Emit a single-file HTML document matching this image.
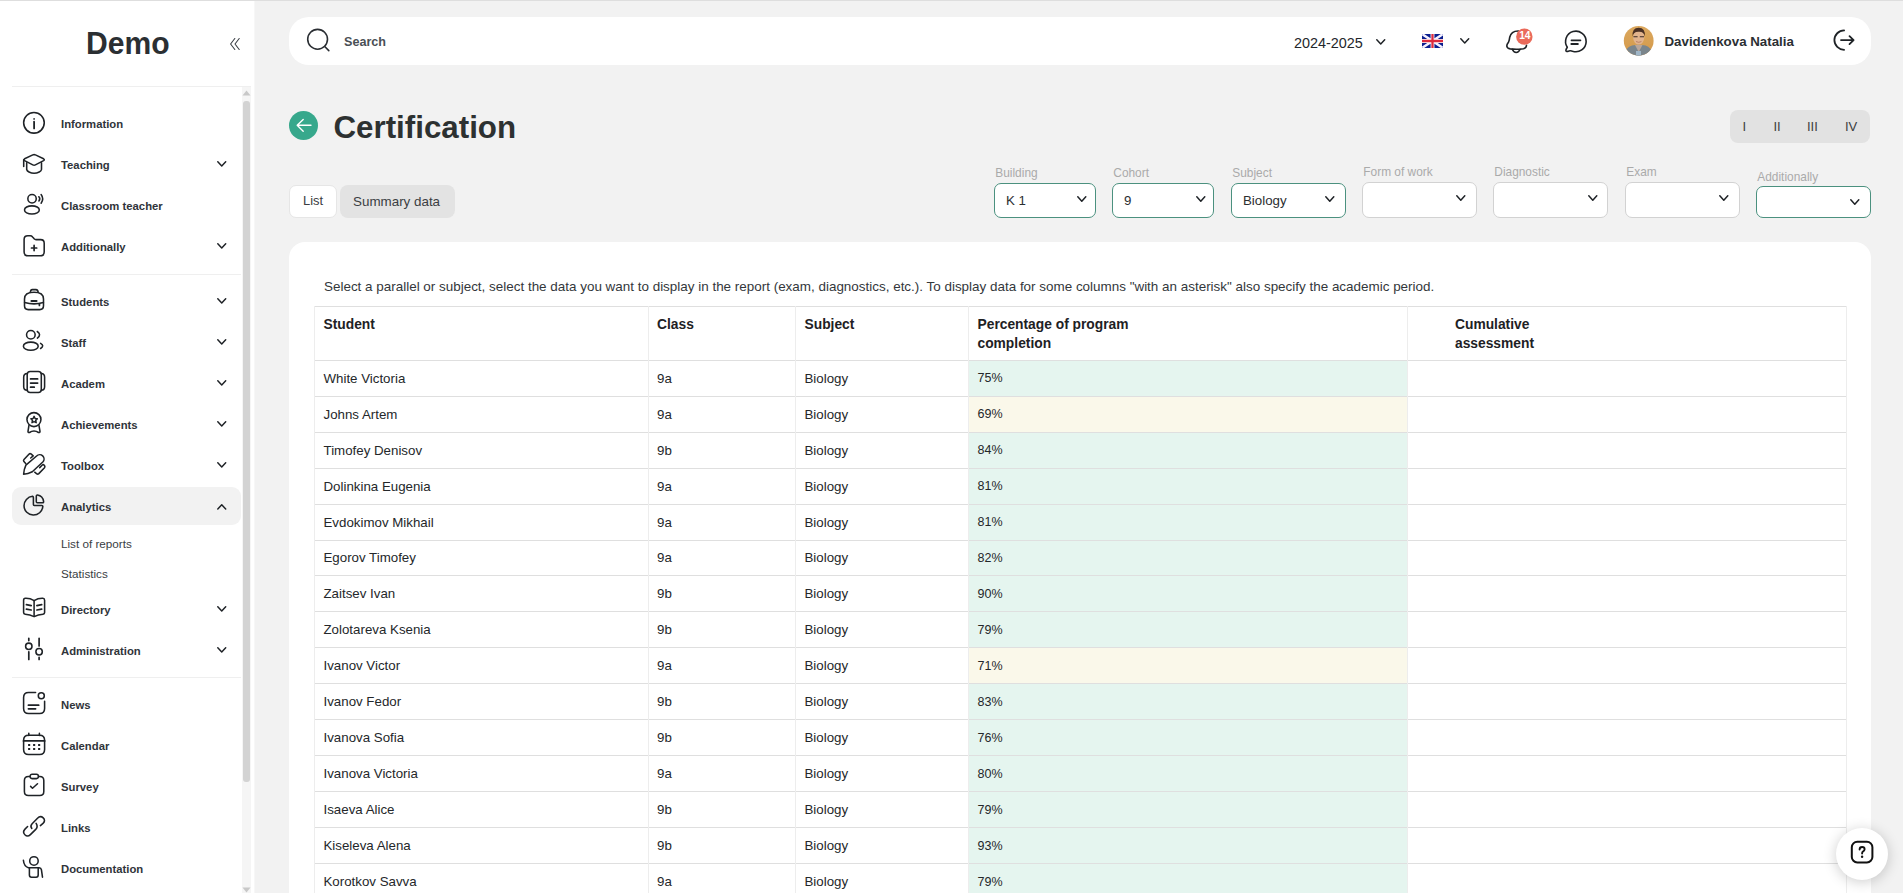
<!DOCTYPE html>
<html><head><meta charset="utf-8"><title>Certification</title>
<style>
html,body{margin:0;padding:0;}
body{width:1903px;height:893px;overflow:hidden;background:#f2f2f2;font-family:"Liberation Sans", sans-serif;position:relative;}
div,span{box-sizing:border-box;}
</style></head><body>

<div style="position:absolute;left:0;top:0;width:1903px;height:1px;background:#dedede"></div>
<div style="position:absolute;left:0;top:1px;width:254px;height:892px;background:#fff"></div>
<div style="position:absolute;left:254px;top:1px;width:1px;height:892px;background:#f7f7f7"></div>
<div style="position:absolute;left:85.8px;top:27.41px;font-size:32px;line-height:32px;font-weight:700;color:#2b2f33;white-space:nowrap;transform:scaleX(0.94);transform-origin:0 0">Demo</div>
<svg style="position:absolute;left:229px;top:37px" width="12" height="14" viewBox="0 0 12 14"><path d="M5.8 1.5 L1.6 7 L5.8 12.5 M10.2 1.5 L6 7 L10.2 12.5" fill="none" stroke="#3a3f45" stroke-width="1.1" stroke-linecap="round" stroke-linejoin="round"/></svg>
<div style="position:absolute;left:12px;top:86px;width:239px;height:1px;background:#efefef"></div>
<div style="position:absolute;left:12px;top:274px;width:229px;height:1px;background:#efefef"></div>
<div style="position:absolute;left:12px;top:677px;width:229px;height:1px;background:#efefef"></div>
<div style="position:absolute;left:242px;top:87px;width:9px;height:806px;background:#f5f5f5"></div>
<div style="position:absolute;left:243px;top:101px;width:7px;height:681px;background:#d3d3d3;border-radius:3px"></div>
<svg style="position:absolute;left:242px;top:90px" width="9" height="6" viewBox="0 0 9 6"><path d="M4.5 0.5 L8.5 5.5 L0.5 5.5Z" fill="#c8c8c8"/></svg>
<svg style="position:absolute;left:242px;top:887px" width="9" height="6" viewBox="0 0 9 6"><path d="M0.5 0.5 L8.5 0.5 L4.5 5.5Z" fill="#c8c8c8"/></svg>
<div style="position:absolute;left:12px;top:487px;width:229px;height:38px;background:#f2f2f2;border-radius:9px"></div>
<svg style="position:absolute;left:20px;top:109px" width="28" height="28" viewBox="0 0 28 28" stroke="#1f2327" stroke-width="1.55" fill="none" stroke-linecap="round" stroke-linejoin="round"><circle cx="13.95" cy="13.8" r="10.3"/><path d="M14.1 12.6 V19.4" stroke-width="1.8"/><circle cx="14.1" cy="9.9" r="0.9" fill="#2a2e33" stroke="none"/></svg>
<div style="position:absolute;left:61px;top:118.73px;font-size:11.3px;line-height:11.3px;font-weight:700;color:#30343a;white-space:nowrap;">Information</div>
<svg style="position:absolute;left:20px;top:150px" width="28" height="28" viewBox="0 0 28 28" stroke="#1f2327" stroke-width="1.55" fill="none" stroke-linecap="round" stroke-linejoin="round"><path d="M12.8 4.9 Q14.1 4.3 15.4 4.9 L23.6 8.8 Q25 9.7 23.6 10.6 L15.4 14.9 Q14.1 15.6 12.8 14.9 L4.6 10.6 Q3.2 9.7 4.6 8.8 Z"/><path d="M3.7 9.8 V16.5"/><path d="M6.7 12.8 V19.5 Q7 21 9 22 Q11.5 23.3 14.1 23.3 Q16.7 23.3 19.2 22 Q21.3 21 21.5 19.5 V12.8"/></svg>
<div style="position:absolute;left:61px;top:159.73px;font-size:11.3px;line-height:11.3px;font-weight:700;color:#30343a;white-space:nowrap;">Teaching</div>
<svg style="position:absolute;left:216px;top:160.1px" width="11.5" height="7.5" viewBox="-1 -1 11.5 7.5"><path d="M0.8 0.8 L4.75 4.9 L8.7 0.8" fill="none" stroke="#1e2226" stroke-width="1.5" stroke-linecap="round" stroke-linejoin="round"/></svg>
<svg style="position:absolute;left:20px;top:191px" width="28" height="28" viewBox="0 0 28 28" stroke="#1f2327" stroke-width="1.55" fill="none" stroke-linecap="round" stroke-linejoin="round"><circle cx="12.05" cy="7.75" r="4.2"/><ellipse cx="11.9" cy="18.95" rx="7.4" ry="4.1"/><path d="M18.9 5.7 Q20.7 7.8 18.9 9.9"/><path d="M21.1 3.5 Q24.3 7.8 21.1 12.2"/></svg>
<div style="position:absolute;left:61px;top:200.73px;font-size:11.3px;line-height:11.3px;font-weight:700;color:#30343a;white-space:nowrap;">Classroom teacher</div>
<svg style="position:absolute;left:20px;top:232px" width="28" height="28" viewBox="0 0 28 28" stroke="#1f2327" stroke-width="1.55" fill="none" stroke-linecap="round" stroke-linejoin="round"><path d="M4.1 7.5 Q4.1 3.8 7.8 3.8 H10.2 Q11.6 3.8 12.6 5 L14.4 7 Q15 7.6 16 7.6 H20.6 Q24.2 7.6 24.2 11.2 V20 Q24.2 23.8 20.4 23.8 H7.9 Q4.1 23.8 4.1 20 Z"/><path d="M14.1 13.4 V18.6 M11.5 16 H16.7" stroke-width="1.7"/></svg>
<div style="position:absolute;left:61px;top:241.73px;font-size:11.3px;line-height:11.3px;font-weight:700;color:#30343a;white-space:nowrap;">Additionally</div>
<svg style="position:absolute;left:216px;top:242.1px" width="11.5" height="7.5" viewBox="-1 -1 11.5 7.5"><path d="M0.8 0.8 L4.75 4.9 L8.7 0.8" fill="none" stroke="#1e2226" stroke-width="1.5" stroke-linecap="round" stroke-linejoin="round"/></svg>
<svg style="position:absolute;left:20px;top:287px" width="28" height="28" viewBox="0 0 28 28" stroke="#1f2327" stroke-width="1.55" fill="none" stroke-linecap="round" stroke-linejoin="round"><path d="M10.3 5.4 Q10.6 2.6 12.3 2.6 H16 Q17.7 2.6 18.2 5.2"/><path d="M4.5 12 Q4.5 5.3 14 5.3 Q23.5 5.3 23.5 12 V18.8 Q23.5 22.6 19.7 22.6 H8.3 Q4.5 22.6 4.5 18.8 Z"/><path d="M4.6 15.5 Q14 18.3 23.4 15.5"/><path d="M11.4 14 H16.6" stroke-width="1.9"/><path d="M19.4 17.2 V18.4" stroke-width="1.7"/></svg>
<div style="position:absolute;left:61px;top:296.73px;font-size:11.3px;line-height:11.3px;font-weight:700;color:#30343a;white-space:nowrap;">Students</div>
<svg style="position:absolute;left:216px;top:297.1px" width="11.5" height="7.5" viewBox="-1 -1 11.5 7.5"><path d="M0.8 0.8 L4.75 4.9 L8.7 0.8" fill="none" stroke="#1e2226" stroke-width="1.5" stroke-linecap="round" stroke-linejoin="round"/></svg>
<svg style="position:absolute;left:20px;top:328px" width="28" height="28" viewBox="0 0 28 28" stroke="#1f2327" stroke-width="1.55" fill="none" stroke-linecap="round" stroke-linejoin="round"><circle cx="10.85" cy="6.75" r="4.3"/><ellipse cx="10.8" cy="18.2" rx="7.4" ry="4.1"/><path d="M17.3 3.5 Q21.8 6.7 17.4 10.1"/><path d="M20.6 15.3 Q24.8 17.8 20.6 20.5"/></svg>
<div style="position:absolute;left:61px;top:337.73px;font-size:11.3px;line-height:11.3px;font-weight:700;color:#30343a;white-space:nowrap;">Staff</div>
<svg style="position:absolute;left:216px;top:338.1px" width="11.5" height="7.5" viewBox="-1 -1 11.5 7.5"><path d="M0.8 0.8 L4.75 4.9 L8.7 0.8" fill="none" stroke="#1e2226" stroke-width="1.5" stroke-linecap="round" stroke-linejoin="round"/></svg>
<svg style="position:absolute;left:20px;top:369px" width="28" height="28" viewBox="0 0 28 28" stroke="#1f2327" stroke-width="1.55" fill="none" stroke-linecap="round" stroke-linejoin="round"><path d="M10.2 2.5 H18.3 Q21.3 2.5 21.3 5.5 V20.5 Q21.3 23.5 18.3 23.5 H10.2 Q7.2 23.5 7.2 20.5 V5.5 Q7.2 2.5 10.2 2.5 Z"/><path d="M7.2 4.6 Q3.7 4.8 3.7 8.2 V17.8 Q3.7 21.2 7.2 21.3"/><path d="M21.3 4.6 Q24.6 4.8 24.6 8.2 V17.8 Q24.6 21.2 21.3 21.3"/><path d="M10.6 9.9 H17.6 M10.6 14.1 H17.6 M10.6 18.2 H14.2" stroke-width="1.8"/></svg>
<div style="position:absolute;left:61px;top:378.73px;font-size:11.3px;line-height:11.3px;font-weight:700;color:#30343a;white-space:nowrap;">Academ</div>
<svg style="position:absolute;left:216px;top:379.1px" width="11.5" height="7.5" viewBox="-1 -1 11.5 7.5"><path d="M0.8 0.8 L4.75 4.9 L8.7 0.8" fill="none" stroke="#1e2226" stroke-width="1.5" stroke-linecap="round" stroke-linejoin="round"/></svg>
<svg style="position:absolute;left:20px;top:410px" width="28" height="28" viewBox="0 0 28 28" stroke="#1f2327" stroke-width="1.55" fill="none" stroke-linecap="round" stroke-linejoin="round"><circle cx="13.95" cy="9.6" r="7"/><path d="M14.1 6.4 L15.1 8.5 L17.3 8.8 L15.7 10.4 L16.2 12.7 L14.1 11.6 L12 12.7 L12.5 10.4 L10.9 8.8 L13.1 8.5 Z" stroke-width="1.5"/><path d="M8.9 15.6 L8 21.3 Q7.9 22.9 9.5 22.5 Q11.6 21 14 21 Q16.4 21 18.5 22.5 Q20.1 22.9 20 21.3 L19 15.6"/></svg>
<div style="position:absolute;left:61px;top:419.73px;font-size:11.3px;line-height:11.3px;font-weight:700;color:#30343a;white-space:nowrap;">Achievements</div>
<svg style="position:absolute;left:216px;top:420.1px" width="11.5" height="7.5" viewBox="-1 -1 11.5 7.5"><path d="M0.8 0.8 L4.75 4.9 L8.7 0.8" fill="none" stroke="#1e2226" stroke-width="1.5" stroke-linecap="round" stroke-linejoin="round"/></svg>
<svg style="position:absolute;left:20px;top:451px" width="28" height="28" viewBox="0 0 28 28" stroke="#1f2327" stroke-width="1.55" fill="none" stroke-linecap="round" stroke-linejoin="round"><path d="M5.9 14.2 L16.6 5 A4.2 4.2 0 0 1 22.8 11 L12.3 20.8 Q8 23 3.6 23.2 Q3.9 18.5 5.9 14.2 Z"/><path d="M5.7 12.6 L3.9 10.6 Q3.1 9.5 4 8.5 L8.9 3.2 Q9.9 2.2 11 2.9 L13.2 4.8 L10.7 7"/><path d="M19.7 16.6 L22.3 14 Q23.3 13.2 24.2 14.2 L24.6 14.7 Q25.3 15.7 24.5 16.7 L18.8 22.6 Q17.8 23.5 16.8 22.8 L14.7 21.2"/></svg>
<div style="position:absolute;left:61px;top:460.73px;font-size:11.3px;line-height:11.3px;font-weight:700;color:#30343a;white-space:nowrap;">Toolbox</div>
<svg style="position:absolute;left:216px;top:461.1px" width="11.5" height="7.5" viewBox="-1 -1 11.5 7.5"><path d="M0.8 0.8 L4.75 4.9 L8.7 0.8" fill="none" stroke="#1e2226" stroke-width="1.5" stroke-linecap="round" stroke-linejoin="round"/></svg>
<svg style="position:absolute;left:20px;top:492px" width="28" height="28" viewBox="0 0 28 28" stroke="#1f2327" stroke-width="1.55" fill="none" stroke-linecap="round" stroke-linejoin="round"><path d="M12.6 4.3 Q13.3 4.6 13.4 5.5 V12.5 Q13.4 13.4 14.3 13.4 H21.8 Q22.9 13.5 22.8 14.6 A9.4 9.4 0 1 1 12.6 4.3 Z"/><path d="M16.3 4.3 Q16.3 3 17.5 3.1 A7.6 7.6 0 0 1 23.6 9.4 Q23.8 10.7 22.5 10.7 H17.3 Q16.3 10.7 16.3 9.7 Z"/></svg>
<div style="position:absolute;left:61px;top:501.73px;font-size:11.3px;line-height:11.3px;font-weight:700;color:#30343a;white-space:nowrap;">Analytics</div>
<svg style="position:absolute;left:216px;top:502.6px" width="11.5" height="7.5" viewBox="-1 -1 11.5 7.5"><path d="M0.8 4.9 L4.75 0.8 L8.7 4.9" fill="none" stroke="#1e2226" stroke-width="1.5" stroke-linecap="round" stroke-linejoin="round"/></svg>
<svg style="position:absolute;left:20px;top:595px" width="28" height="28" viewBox="0 0 28 28" stroke="#1f2327" stroke-width="1.55" fill="none" stroke-linecap="round" stroke-linejoin="round"><path d="M14.1 5.6 Q10 3.1 5.4 3.3 Q3.6 3.4 3.6 5.2 V17.6 Q3.6 19.1 5.2 19.2 Q10 19.5 14.1 21.6 Q18.2 19.5 23 19.2 Q24.6 19.1 24.6 17.6 V5.2 Q24.6 3.4 22.8 3.3 Q18.2 3.1 14.1 5.6 Z"/><path d="M14.1 5.8 V21"/><path d="M6.4 9.7 L11.2 10.7 M6.4 14.1 L11.2 15 M21.7 9.7 L16.9 10.7 M21.7 14.1 L16.9 15" stroke-width="1.7"/></svg>
<div style="position:absolute;left:61px;top:604.73px;font-size:11.3px;line-height:11.3px;font-weight:700;color:#30343a;white-space:nowrap;">Directory</div>
<svg style="position:absolute;left:216px;top:605.1px" width="11.5" height="7.5" viewBox="-1 -1 11.5 7.5"><path d="M0.8 0.8 L4.75 4.9 L8.7 0.8" fill="none" stroke="#1e2226" stroke-width="1.5" stroke-linecap="round" stroke-linejoin="round"/></svg>
<svg style="position:absolute;left:20px;top:636px" width="28" height="28" viewBox="0 0 28 28" stroke="#1f2327" stroke-width="1.55" fill="none" stroke-linecap="round" stroke-linejoin="round"><path d="M8.8 2.3 V4.6 M8.8 15.8 V23.4 M19.1 2.3 V10 M19.1 21.4 V23.4" stroke-width="1.7"/><circle cx="8.8" cy="10.3" r="3.2"/><circle cx="19.1" cy="15.7" r="3.2"/></svg>
<div style="position:absolute;left:61px;top:645.73px;font-size:11.3px;line-height:11.3px;font-weight:700;color:#30343a;white-space:nowrap;">Administration</div>
<svg style="position:absolute;left:216px;top:646.1px" width="11.5" height="7.5" viewBox="-1 -1 11.5 7.5"><path d="M0.8 0.8 L4.75 4.9 L8.7 0.8" fill="none" stroke="#1e2226" stroke-width="1.5" stroke-linecap="round" stroke-linejoin="round"/></svg>
<svg style="position:absolute;left:20px;top:690px" width="28" height="28" viewBox="0 0 28 28" stroke="#1f2327" stroke-width="1.55" fill="none" stroke-linecap="round" stroke-linejoin="round"><path d="M15.6 2.5 H8.6 Q3.6 2.5 3.6 7.5 V18.4 Q3.6 23.4 8.6 23.4 H19.6 Q24.6 23.4 24.6 18.4 V11.2"/><circle cx="21.3" cy="5.8" r="3"/><path d="M8.4 15.2 H18.7 M8.4 18.8 H15.6" stroke-width="1.7"/></svg>
<div style="position:absolute;left:61px;top:699.73px;font-size:11.3px;line-height:11.3px;font-weight:700;color:#30343a;white-space:nowrap;">News</div>
<svg style="position:absolute;left:20px;top:731px" width="28" height="28" viewBox="0 0 28 28" stroke="#1f2327" stroke-width="1.55" fill="none" stroke-linecap="round" stroke-linejoin="round"><path d="M8.6 4.2 H19.6 Q24.6 4.2 24.6 9.2 V18.4 Q24.6 23.4 19.6 23.4 H8.6 Q3.6 23.4 3.6 18.4 V9.2 Q3.6 4.2 8.6 4.2 Z"/><path d="M8.8 2.2 V4.4 M19.4 2.2 V4.4"/><path d="M3.6 9.9 H24.6" stroke-width="1.9"/><path d="M9.1 13.9 h0.1 M14.1 13.9 h0.1 M19.1 13.9 h0.1 M9.1 18 h0.1 M14.1 18 h0.1 M19.1 18 h0.1" stroke-width="2" stroke-linecap="square"/></svg>
<div style="position:absolute;left:61px;top:740.73px;font-size:11.3px;line-height:11.3px;font-weight:700;color:#30343a;white-space:nowrap;">Calendar</div>
<svg style="position:absolute;left:20px;top:772px" width="28" height="28" viewBox="0 0 28 28" stroke="#1f2327" stroke-width="1.55" fill="none" stroke-linecap="round" stroke-linejoin="round"><path d="M9.6 4.4 H8.4 Q4.4 4.4 4.4 8.4 V19.4 Q4.4 23.4 8.4 23.4 H19.8 Q23.8 23.4 23.8 19.4 V8.4 Q23.8 4.4 19.8 4.4 H18.6"/><rect x="10.1" y="2.3" width="8.3" height="4.3" rx="2"/><path d="M10.6 14.4 L12.5 16.3 L17.5 11.7"/></svg>
<div style="position:absolute;left:61px;top:781.73px;font-size:11.3px;line-height:11.3px;font-weight:700;color:#30343a;white-space:nowrap;">Survey</div>
<svg style="position:absolute;left:20px;top:813px" width="28" height="28" viewBox="0 0 28 28" stroke="#1f2327" stroke-width="1.55" fill="none" stroke-linecap="round" stroke-linejoin="round"><path d="M11.8 15.4 Q9.9 13.1 12.1 10.8 L17.5 5.2 Q20.4 2.3 23.2 4.9 Q25.9 7.6 23 10.4 L20.4 12.6"/><path d="M7.6 13.5 L5 16.1 Q2.2 19 4.9 21.8 Q7.6 24.4 10.4 21.6 L16 16.1 Q18.2 13.7 16.1 10.4"/></svg>
<div style="position:absolute;left:61px;top:822.73px;font-size:11.3px;line-height:11.3px;font-weight:700;color:#30343a;white-space:nowrap;">Links</div>
<svg style="position:absolute;left:20px;top:854px" width="28" height="28" viewBox="0 0 28 28" stroke="#1f2327" stroke-width="1.55" fill="none" stroke-linecap="round" stroke-linejoin="round"><circle cx="13.95" cy="6.9" r="4.25"/><path d="M3.4 6.3 Q4 12.5 8.4 13.7 H19.2 Q21 13.9 21.4 15.6 L22.5 23.2"/><path d="M9.4 13.8 V21.1 Q9.4 23.2 11.5 23.2 H16.1 Q18.2 23.2 18.2 21.1 V13.8"/></svg>
<div style="position:absolute;left:61px;top:863.73px;font-size:11.3px;line-height:11.3px;font-weight:700;color:#30343a;white-space:nowrap;">Documentation</div>
<div style="position:absolute;left:61px;top:537.70px;font-size:11.7px;line-height:11.7px;font-weight:400;color:#3a3e44;white-space:nowrap;">List of reports</div>
<div style="position:absolute;left:61px;top:567.70px;font-size:11.7px;line-height:11.7px;font-weight:400;color:#3a3e44;white-space:nowrap;">Statistics</div>
<div style="position:absolute;left:289px;top:17px;width:1582px;height:48px;background:#fff;border-radius:20px"></div>
<svg style="position:absolute;left:305px;top:27px" width="26" height="26" viewBox="0 0 26 26"><circle cx="12.6" cy="12.3" r="9.9" fill="none" stroke="#2a2e33" stroke-width="1.6"/><path d="M19.7 19.5 L23.8 23.6" stroke="#2a2e33" stroke-width="1.6" stroke-linecap="round"/></svg>
<div style="position:absolute;left:344px;top:36.13px;font-size:12.6px;line-height:12.6px;font-weight:700;color:#4a4f55;white-space:nowrap;">Search</div>
<div style="position:absolute;left:1294px;top:35.61px;font-size:14.4px;line-height:14.4px;font-weight:400;color:#24272b;white-space:nowrap;">2024-2025</div>
<svg style="position:absolute;left:1375px;top:38px" width="11.5" height="7.5" viewBox="-1 -1 11.5 7.5"><path d="M0.8 0.8 L4.75 4.9 L8.7 0.8" fill="none" stroke="#1e2226" stroke-width="1.5" stroke-linecap="round" stroke-linejoin="round"/></svg>
<svg style="position:absolute;left:1422px;top:34px" width="21" height="14" viewBox="0 0 60 40"><defs><clipPath id="fl"><rect width="60" height="40" rx="4"/></clipPath></defs><g clip-path="url(#fl)"><rect width="60" height="40" fill="#0b1f8f"/><path d="M0 0 L60 40 M60 0 L0 40" stroke="#f4f0ff" stroke-width="7"/><path d="M30 0 V40 M0 20 H60" stroke="#fff" stroke-width="11"/><path d="M30 0 V40 M0 20 H60" stroke="#dd2a3e" stroke-width="6.5"/></g></svg>
<svg style="position:absolute;left:1459px;top:37px" width="11.5" height="7.5" viewBox="-1 -1 11.5 7.5"><path d="M0.8 0.8 L4.75 4.9 L8.7 0.8" fill="none" stroke="#1e2226" stroke-width="1.5" stroke-linecap="round" stroke-linejoin="round"/></svg>
<svg style="position:absolute;left:1502px;top:26px" width="34" height="30" viewBox="0 0 34 30"><path d="M16.5 5 Q9.2 4.8 7.7 11.3 Q7.3 14.4 6.6 16 Q4.7 18.4 4.8 20.1 Q5.2 22.4 8.2 22.9 Q15 23.8 21.5 22.7 Q24.3 22.1 24.5 19.2" fill="none" stroke="#1e2226" stroke-width="1.6" stroke-linecap="round" stroke-linejoin="round"/><path d="M10.3 23.3 Q11.6 26.5 14.2 26.5 Q16.8 26.5 18.1 23.3" fill="none" stroke="#1e2226" stroke-width="1.6" stroke-linecap="round"/><circle cx="22.35" cy="10.65" r="8.2" fill="#ea6a5a"/></svg>
<div style="position:absolute;left:1519.3px;top:31.27px;font-size:10.2px;line-height:10.2px;font-weight:700;color:#fff;white-space:nowrap;letter-spacing:-0.3px">14</div>
<svg style="position:absolute;left:1560px;top:26px" width="34" height="30" viewBox="0 0 34 30"><path d="M7.3 21.2 A10.3 10.3 0 1 1 12.5 25.2 Q10.6 24.3 8.8 25.1 Q6.1 26.2 5.9 24.6 Q5.8 23.3 7.3 21.2 Z" fill="none" stroke="#1e2226" stroke-width="1.6" stroke-linejoin="round"/><path d="M11.4 14.4 H20.5" stroke="#1e2226" stroke-width="1.6" stroke-linecap="round"/><path d="M11.4 18.1 H17.8" stroke="#1e2226" stroke-width="2" stroke-linecap="round"/></svg>
<svg style="position:absolute;left:1620px;top:22px" width="38" height="38" viewBox="0 0 38 38"><defs><clipPath id="av"><circle cx="18.7" cy="18.8" r="14.9"/></clipPath><linearGradient id="avg" x1="0" y1="0" x2="0" y2="1"><stop offset="0" stop-color="#dcaa62"/><stop offset="1" stop-color="#d39645"/></linearGradient></defs><g clip-path="url(#av)"><rect width="38" height="38" fill="url(#avg)"/><path d="M4 36 Q5 25 12 23.5 Q18.7 22 25.5 23.5 Q32 25 33.5 36 Z" fill="#7a858c"/><path d="M15 23 L18.7 30 L22.5 23 Z" fill="#b9a69a"/><rect x="16" y="29" width="5" height="6" fill="#9fb6c8"/><ellipse cx="18.7" cy="15.2" rx="5.6" ry="7.4" fill="#e2b48e"/><path d="M12.6 14.5 Q11.8 6 18.7 5.8 Q25.6 6 24.8 14.5 Q24 9.5 18.7 9.8 Q13.4 9.5 12.6 14.5 Z" fill="#4a3024"/><path d="M13.4 14.8 h4.2 M19.8 14.8 h4.2" stroke="#3a2a24" stroke-width="1.1"/><path d="M16 19.5 Q18.7 21.2 21.4 19.5" stroke="#b07560" stroke-width="0.8" fill="none"/></g></svg>
<div style="position:absolute;left:1664.5px;top:34.74px;font-size:13.3px;line-height:13.3px;font-weight:700;color:#2b2f33;white-space:nowrap;">Davidenkova Natalia</div>
<svg style="position:absolute;left:1828px;top:24px" width="34" height="32" viewBox="0 0 34 32"><path d="M16.1 6.4 A9.7 9.7 0 1 0 16.1 25.8" fill="none" stroke="#1e2226" stroke-width="1.8" stroke-linecap="round"/><path d="M13 16.1 H25.6 M21.5 12.1 L25.6 16.1 L21.5 20.1" fill="none" stroke="#1e2226" stroke-width="1.8" stroke-linecap="round" stroke-linejoin="round"/></svg>
<div style="position:absolute;left:289.2px;top:110.7px;width:29px;height:29px;border-radius:50%;background:#37a88c"></div>
<svg style="position:absolute;left:294px;top:115px" width="20" height="20" viewBox="294 115 20 20"><path d="M311 125.3 H297.3 M303.2 119.6 L297.2 125.3 L303.2 131.2" fill="none" stroke="#fff" stroke-width="1.4" stroke-linecap="round" stroke-linejoin="round"/></svg>
<div style="position:absolute;left:333.5px;top:112.10px;font-size:31.3px;line-height:31.3px;font-weight:700;color:#2d3131;white-space:nowrap;">Certification</div>
<div style="position:absolute;left:1730px;top:110px;width:140px;height:33px;background:#e2e2e2;border-radius:8px"></div>
<div style="position:absolute;left:1742.5px;top:120.00px;font-size:13px;line-height:13px;font-weight:400;color:#3a3d40;white-space:nowrap;">I</div>
<div style="position:absolute;left:1773.5px;top:120.00px;font-size:13px;line-height:13px;font-weight:400;color:#3a3d40;white-space:nowrap;">II</div>
<div style="position:absolute;left:1807px;top:120.00px;font-size:13px;line-height:13px;font-weight:400;color:#3a3d40;white-space:nowrap;">III</div>
<div style="position:absolute;left:1845px;top:120.00px;font-size:13px;line-height:13px;font-weight:400;color:#3a3d40;white-space:nowrap;">IV</div>
<div style="position:absolute;left:289px;top:185px;width:48px;height:33px;background:#fff;border:1px solid #e6e6e6;border-radius:7px"></div>
<div style="position:absolute;left:303px;top:195.08px;font-size:12.9px;line-height:12.9px;font-weight:400;color:#3b3e42;white-space:nowrap;">List</div>
<div style="position:absolute;left:340px;top:185px;width:115px;height:33px;background:#e3e3e3;border-radius:8px"></div>
<div style="position:absolute;left:353px;top:194.66px;font-size:13.4px;line-height:13.4px;font-weight:400;color:#3b3e42;white-space:nowrap;">Summary data</div>
<div style="position:absolute;left:995.3px;top:167.83px;font-size:11.9px;line-height:11.9px;font-weight:400;color:#aaaaaa;white-space:nowrap;">Building</div>
<div style="position:absolute;left:994px;top:183px;width:102px;height:35px;background:#fff;border:1px solid #4b917f;border-radius:7px"></div>
<div style="position:absolute;left:1006px;top:193.54px;font-size:13.3px;line-height:13.3px;font-weight:400;color:#2b2e31;white-space:nowrap;">K 1</div>
<svg style="position:absolute;left:1076px;top:195px" width="11.6" height="7.8" viewBox="-1 -1 11.6 7.8"><path d="M0.8 0.8 L4.8 5.2 L8.799999999999999 0.8" fill="none" stroke="#1e2226" stroke-width="1.5" stroke-linecap="round" stroke-linejoin="round"/></svg>
<div style="position:absolute;left:1113.3px;top:167.83px;font-size:11.9px;line-height:11.9px;font-weight:400;color:#aaaaaa;white-space:nowrap;">Cohort</div>
<div style="position:absolute;left:1112px;top:183px;width:102px;height:35px;background:#fff;border:1px solid #4b917f;border-radius:7px"></div>
<div style="position:absolute;left:1124px;top:193.54px;font-size:13.3px;line-height:13.3px;font-weight:400;color:#2b2e31;white-space:nowrap;">9</div>
<svg style="position:absolute;left:1194.5px;top:195px" width="11.6" height="7.8" viewBox="-1 -1 11.6 7.8"><path d="M0.8 0.8 L4.8 5.2 L8.799999999999999 0.8" fill="none" stroke="#1e2226" stroke-width="1.5" stroke-linecap="round" stroke-linejoin="round"/></svg>
<div style="position:absolute;left:1232.3px;top:167.83px;font-size:11.9px;line-height:11.9px;font-weight:400;color:#aaaaaa;white-space:nowrap;">Subject</div>
<div style="position:absolute;left:1231px;top:183px;width:115px;height:35px;background:#fff;border:1px solid #4b917f;border-radius:7px"></div>
<div style="position:absolute;left:1243px;top:193.54px;font-size:13.3px;line-height:13.3px;font-weight:400;color:#2b2e31;white-space:nowrap;">Biology</div>
<svg style="position:absolute;left:1324px;top:195px" width="11.6" height="7.8" viewBox="-1 -1 11.6 7.8"><path d="M0.8 0.8 L4.8 5.2 L8.799999999999999 0.8" fill="none" stroke="#1e2226" stroke-width="1.5" stroke-linecap="round" stroke-linejoin="round"/></svg>
<div style="position:absolute;left:1363.3px;top:166.83px;font-size:11.9px;line-height:11.9px;font-weight:400;color:#aaaaaa;white-space:nowrap;">Form of work</div>
<div style="position:absolute;left:1362px;top:182px;width:115px;height:36px;background:#fff;border:1px solid #d2d2d2;border-radius:7px"></div>
<svg style="position:absolute;left:1455px;top:194.3px" width="11.6" height="7.8" viewBox="-1 -1 11.6 7.8"><path d="M0.8 0.8 L4.8 5.2 L8.799999999999999 0.8" fill="none" stroke="#1e2226" stroke-width="1.5" stroke-linecap="round" stroke-linejoin="round"/></svg>
<div style="position:absolute;left:1494.3px;top:166.83px;font-size:11.9px;line-height:11.9px;font-weight:400;color:#aaaaaa;white-space:nowrap;">Diagnostic</div>
<div style="position:absolute;left:1493px;top:182px;width:115px;height:36px;background:#fff;border:1px solid #d2d2d2;border-radius:7px"></div>
<svg style="position:absolute;left:1586.6px;top:194.3px" width="11.6" height="7.8" viewBox="-1 -1 11.6 7.8"><path d="M0.8 0.8 L4.8 5.2 L8.799999999999999 0.8" fill="none" stroke="#1e2226" stroke-width="1.5" stroke-linecap="round" stroke-linejoin="round"/></svg>
<div style="position:absolute;left:1626.3px;top:166.83px;font-size:11.9px;line-height:11.9px;font-weight:400;color:#aaaaaa;white-space:nowrap;">Exam</div>
<div style="position:absolute;left:1625px;top:182px;width:115px;height:36px;background:#fff;border:1px solid #d2d2d2;border-radius:7px"></div>
<svg style="position:absolute;left:1717.8px;top:194.3px" width="11.6" height="7.8" viewBox="-1 -1 11.6 7.8"><path d="M0.8 0.8 L4.8 5.2 L8.799999999999999 0.8" fill="none" stroke="#1e2226" stroke-width="1.5" stroke-linecap="round" stroke-linejoin="round"/></svg>
<div style="position:absolute;left:1757.3px;top:171.93px;font-size:11.9px;line-height:11.9px;font-weight:400;color:#aaaaaa;white-space:nowrap;">Additionally</div>
<div style="position:absolute;left:1756px;top:186px;width:115px;height:32px;background:#fff;border:1px solid #4b917f;border-radius:7px"></div>
<svg style="position:absolute;left:1849.2px;top:198px" width="11.6" height="7.8" viewBox="-1 -1 11.6 7.8"><path d="M0.8 0.8 L4.8 5.2 L8.799999999999999 0.8" fill="none" stroke="#1e2226" stroke-width="1.5" stroke-linecap="round" stroke-linejoin="round"/></svg>
<div style="position:absolute;left:289px;top:242px;width:1582px;height:700px;background:#fff;border-radius:16px"></div>
<div style="position:absolute;left:324px;top:279.61px;font-size:13.45px;line-height:13.45px;font-weight:400;color:#33373b;white-space:nowrap;">Select a parallel or subject, select the data you want to display in the report (exam, diagnostics, etc.). To display data for some columns "with an asterisk" also specify the academic period.</div>
<div style="position:absolute;left:968.3px;top:360.40px;width:439.30px;height:35.93px;background:#e5f5ef"></div>
<div style="position:absolute;left:968.3px;top:396.33px;width:439.30px;height:35.93px;background:#faf8ea"></div>
<div style="position:absolute;left:968.3px;top:432.26px;width:439.30px;height:35.93px;background:#e5f5ef"></div>
<div style="position:absolute;left:968.3px;top:468.19px;width:439.30px;height:35.93px;background:#e5f5ef"></div>
<div style="position:absolute;left:968.3px;top:504.12px;width:439.30px;height:35.93px;background:#e5f5ef"></div>
<div style="position:absolute;left:968.3px;top:540.05px;width:439.30px;height:35.93px;background:#e5f5ef"></div>
<div style="position:absolute;left:968.3px;top:575.98px;width:439.30px;height:35.93px;background:#e5f5ef"></div>
<div style="position:absolute;left:968.3px;top:611.91px;width:439.30px;height:35.93px;background:#e5f5ef"></div>
<div style="position:absolute;left:968.3px;top:647.84px;width:439.30px;height:35.93px;background:#faf8ea"></div>
<div style="position:absolute;left:968.3px;top:683.77px;width:439.30px;height:35.93px;background:#e5f5ef"></div>
<div style="position:absolute;left:968.3px;top:719.70px;width:439.30px;height:35.93px;background:#e5f5ef"></div>
<div style="position:absolute;left:968.3px;top:755.63px;width:439.30px;height:35.93px;background:#e5f5ef"></div>
<div style="position:absolute;left:968.3px;top:791.56px;width:439.30px;height:35.93px;background:#e5f5ef"></div>
<div style="position:absolute;left:968.3px;top:827.49px;width:439.30px;height:35.93px;background:#e5f5ef"></div>
<div style="position:absolute;left:968.3px;top:863.42px;width:439.30px;height:35.93px;background:#e5f5ef"></div>
<div style="position:absolute;left:314.5px;top:305.90px;width:1532.00px;height:1px;background:#dfdfdf"></div>
<div style="position:absolute;left:314.5px;top:359.90px;width:1532.00px;height:1px;background:#dfdfdf"></div>
<div style="position:absolute;left:314.5px;top:395.83px;width:1532.00px;height:1px;background:#dfdfdf"></div>
<div style="position:absolute;left:314.5px;top:431.76px;width:1532.00px;height:1px;background:#dfdfdf"></div>
<div style="position:absolute;left:314.5px;top:467.69px;width:1532.00px;height:1px;background:#dfdfdf"></div>
<div style="position:absolute;left:314.5px;top:503.62px;width:1532.00px;height:1px;background:#dfdfdf"></div>
<div style="position:absolute;left:314.5px;top:539.55px;width:1532.00px;height:1px;background:#dfdfdf"></div>
<div style="position:absolute;left:314.5px;top:575.48px;width:1532.00px;height:1px;background:#dfdfdf"></div>
<div style="position:absolute;left:314.5px;top:611.41px;width:1532.00px;height:1px;background:#dfdfdf"></div>
<div style="position:absolute;left:314.5px;top:647.34px;width:1532.00px;height:1px;background:#dfdfdf"></div>
<div style="position:absolute;left:314.5px;top:683.27px;width:1532.00px;height:1px;background:#dfdfdf"></div>
<div style="position:absolute;left:314.5px;top:719.20px;width:1532.00px;height:1px;background:#dfdfdf"></div>
<div style="position:absolute;left:314.5px;top:755.13px;width:1532.00px;height:1px;background:#dfdfdf"></div>
<div style="position:absolute;left:314.5px;top:791.06px;width:1532.00px;height:1px;background:#dfdfdf"></div>
<div style="position:absolute;left:314.5px;top:826.99px;width:1532.00px;height:1px;background:#dfdfdf"></div>
<div style="position:absolute;left:314.5px;top:862.92px;width:1532.00px;height:1px;background:#dfdfdf"></div>
<div style="position:absolute;left:314.5px;top:898.85px;width:1532.00px;height:1px;background:#dfdfdf"></div>
<div style="position:absolute;left:314.00px;top:306.40px;width:1px;height:620px;background:#ededed"></div>
<div style="position:absolute;left:648.00px;top:306.40px;width:1px;height:620px;background:#ededed"></div>
<div style="position:absolute;left:794.80px;top:306.40px;width:1px;height:620px;background:#ededed"></div>
<div style="position:absolute;left:967.80px;top:306.40px;width:1px;height:620px;background:#ededed"></div>
<div style="position:absolute;left:1407.10px;top:306.40px;width:1px;height:620px;background:#ededed"></div>
<div style="position:absolute;left:1846.00px;top:306.40px;width:1px;height:620px;background:#ededed"></div>
<div style="position:absolute;left:323.5px;top:317.92px;font-size:13.8px;line-height:13.8px;font-weight:700;color:#1e2124;white-space:nowrap;">Student</div>
<div style="position:absolute;left:657px;top:317.92px;font-size:13.8px;line-height:13.8px;font-weight:700;color:#1e2124;white-space:nowrap;">Class</div>
<div style="position:absolute;left:804.5px;top:317.92px;font-size:13.8px;line-height:13.8px;font-weight:700;color:#1e2124;white-space:nowrap;">Subject</div>
<div style="position:absolute;left:977.5px;top:317.92px;font-size:13.8px;line-height:13.8px;font-weight:700;color:#1e2124;white-space:nowrap;">Percentage of program</div>
<div style="position:absolute;left:977.5px;top:336.92px;font-size:13.8px;line-height:13.8px;font-weight:700;color:#1e2124;white-space:nowrap;">completion</div>
<div style="position:absolute;left:1455px;top:317.92px;font-size:13.8px;line-height:13.8px;font-weight:700;color:#1e2124;white-space:nowrap;">Cumulative</div>
<div style="position:absolute;left:1455px;top:336.92px;font-size:13.8px;line-height:13.8px;font-weight:700;color:#1e2124;white-space:nowrap;">assessment</div>
<div style="position:absolute;left:323.5px;top:371.81px;font-size:13.3px;line-height:13.3px;font-weight:400;color:#24272a;white-space:nowrap;">White Victoria</div>
<div style="position:absolute;left:657px;top:371.81px;font-size:13.3px;line-height:13.3px;font-weight:400;color:#24272a;white-space:nowrap;">9a</div>
<div style="position:absolute;left:804.5px;top:371.81px;font-size:13.3px;line-height:13.3px;font-weight:400;color:#24272a;white-space:nowrap;">Biology</div>
<div style="position:absolute;left:977.5px;top:372.48px;font-size:12.5px;line-height:12.5px;font-weight:400;color:#24272a;white-space:nowrap;">75%</div>
<div style="position:absolute;left:323.5px;top:407.74px;font-size:13.3px;line-height:13.3px;font-weight:400;color:#24272a;white-space:nowrap;">Johns Artem</div>
<div style="position:absolute;left:657px;top:407.74px;font-size:13.3px;line-height:13.3px;font-weight:400;color:#24272a;white-space:nowrap;">9a</div>
<div style="position:absolute;left:804.5px;top:407.74px;font-size:13.3px;line-height:13.3px;font-weight:400;color:#24272a;white-space:nowrap;">Biology</div>
<div style="position:absolute;left:977.5px;top:408.41px;font-size:12.5px;line-height:12.5px;font-weight:400;color:#24272a;white-space:nowrap;">69%</div>
<div style="position:absolute;left:323.5px;top:443.67px;font-size:13.3px;line-height:13.3px;font-weight:400;color:#24272a;white-space:nowrap;">Timofey Denisov</div>
<div style="position:absolute;left:657px;top:443.67px;font-size:13.3px;line-height:13.3px;font-weight:400;color:#24272a;white-space:nowrap;">9b</div>
<div style="position:absolute;left:804.5px;top:443.67px;font-size:13.3px;line-height:13.3px;font-weight:400;color:#24272a;white-space:nowrap;">Biology</div>
<div style="position:absolute;left:977.5px;top:444.34px;font-size:12.5px;line-height:12.5px;font-weight:400;color:#24272a;white-space:nowrap;">84%</div>
<div style="position:absolute;left:323.5px;top:479.60px;font-size:13.3px;line-height:13.3px;font-weight:400;color:#24272a;white-space:nowrap;">Dolinkina Eugenia</div>
<div style="position:absolute;left:657px;top:479.60px;font-size:13.3px;line-height:13.3px;font-weight:400;color:#24272a;white-space:nowrap;">9a</div>
<div style="position:absolute;left:804.5px;top:479.60px;font-size:13.3px;line-height:13.3px;font-weight:400;color:#24272a;white-space:nowrap;">Biology</div>
<div style="position:absolute;left:977.5px;top:480.27px;font-size:12.5px;line-height:12.5px;font-weight:400;color:#24272a;white-space:nowrap;">81%</div>
<div style="position:absolute;left:323.5px;top:515.53px;font-size:13.3px;line-height:13.3px;font-weight:400;color:#24272a;white-space:nowrap;">Evdokimov Mikhail</div>
<div style="position:absolute;left:657px;top:515.53px;font-size:13.3px;line-height:13.3px;font-weight:400;color:#24272a;white-space:nowrap;">9a</div>
<div style="position:absolute;left:804.5px;top:515.53px;font-size:13.3px;line-height:13.3px;font-weight:400;color:#24272a;white-space:nowrap;">Biology</div>
<div style="position:absolute;left:977.5px;top:516.20px;font-size:12.5px;line-height:12.5px;font-weight:400;color:#24272a;white-space:nowrap;">81%</div>
<div style="position:absolute;left:323.5px;top:551.46px;font-size:13.3px;line-height:13.3px;font-weight:400;color:#24272a;white-space:nowrap;">Egorov Timofey</div>
<div style="position:absolute;left:657px;top:551.46px;font-size:13.3px;line-height:13.3px;font-weight:400;color:#24272a;white-space:nowrap;">9a</div>
<div style="position:absolute;left:804.5px;top:551.46px;font-size:13.3px;line-height:13.3px;font-weight:400;color:#24272a;white-space:nowrap;">Biology</div>
<div style="position:absolute;left:977.5px;top:552.13px;font-size:12.5px;line-height:12.5px;font-weight:400;color:#24272a;white-space:nowrap;">82%</div>
<div style="position:absolute;left:323.5px;top:587.39px;font-size:13.3px;line-height:13.3px;font-weight:400;color:#24272a;white-space:nowrap;">Zaitsev Ivan</div>
<div style="position:absolute;left:657px;top:587.39px;font-size:13.3px;line-height:13.3px;font-weight:400;color:#24272a;white-space:nowrap;">9b</div>
<div style="position:absolute;left:804.5px;top:587.39px;font-size:13.3px;line-height:13.3px;font-weight:400;color:#24272a;white-space:nowrap;">Biology</div>
<div style="position:absolute;left:977.5px;top:588.06px;font-size:12.5px;line-height:12.5px;font-weight:400;color:#24272a;white-space:nowrap;">90%</div>
<div style="position:absolute;left:323.5px;top:623.32px;font-size:13.3px;line-height:13.3px;font-weight:400;color:#24272a;white-space:nowrap;">Zolotareva Ksenia</div>
<div style="position:absolute;left:657px;top:623.32px;font-size:13.3px;line-height:13.3px;font-weight:400;color:#24272a;white-space:nowrap;">9b</div>
<div style="position:absolute;left:804.5px;top:623.32px;font-size:13.3px;line-height:13.3px;font-weight:400;color:#24272a;white-space:nowrap;">Biology</div>
<div style="position:absolute;left:977.5px;top:623.99px;font-size:12.5px;line-height:12.5px;font-weight:400;color:#24272a;white-space:nowrap;">79%</div>
<div style="position:absolute;left:323.5px;top:659.25px;font-size:13.3px;line-height:13.3px;font-weight:400;color:#24272a;white-space:nowrap;">Ivanov Victor</div>
<div style="position:absolute;left:657px;top:659.25px;font-size:13.3px;line-height:13.3px;font-weight:400;color:#24272a;white-space:nowrap;">9a</div>
<div style="position:absolute;left:804.5px;top:659.25px;font-size:13.3px;line-height:13.3px;font-weight:400;color:#24272a;white-space:nowrap;">Biology</div>
<div style="position:absolute;left:977.5px;top:659.92px;font-size:12.5px;line-height:12.5px;font-weight:400;color:#24272a;white-space:nowrap;">71%</div>
<div style="position:absolute;left:323.5px;top:695.18px;font-size:13.3px;line-height:13.3px;font-weight:400;color:#24272a;white-space:nowrap;">Ivanov Fedor</div>
<div style="position:absolute;left:657px;top:695.18px;font-size:13.3px;line-height:13.3px;font-weight:400;color:#24272a;white-space:nowrap;">9b</div>
<div style="position:absolute;left:804.5px;top:695.18px;font-size:13.3px;line-height:13.3px;font-weight:400;color:#24272a;white-space:nowrap;">Biology</div>
<div style="position:absolute;left:977.5px;top:695.85px;font-size:12.5px;line-height:12.5px;font-weight:400;color:#24272a;white-space:nowrap;">83%</div>
<div style="position:absolute;left:323.5px;top:731.11px;font-size:13.3px;line-height:13.3px;font-weight:400;color:#24272a;white-space:nowrap;">Ivanova Sofia</div>
<div style="position:absolute;left:657px;top:731.11px;font-size:13.3px;line-height:13.3px;font-weight:400;color:#24272a;white-space:nowrap;">9b</div>
<div style="position:absolute;left:804.5px;top:731.11px;font-size:13.3px;line-height:13.3px;font-weight:400;color:#24272a;white-space:nowrap;">Biology</div>
<div style="position:absolute;left:977.5px;top:731.78px;font-size:12.5px;line-height:12.5px;font-weight:400;color:#24272a;white-space:nowrap;">76%</div>
<div style="position:absolute;left:323.5px;top:767.04px;font-size:13.3px;line-height:13.3px;font-weight:400;color:#24272a;white-space:nowrap;">Ivanova Victoria</div>
<div style="position:absolute;left:657px;top:767.04px;font-size:13.3px;line-height:13.3px;font-weight:400;color:#24272a;white-space:nowrap;">9a</div>
<div style="position:absolute;left:804.5px;top:767.04px;font-size:13.3px;line-height:13.3px;font-weight:400;color:#24272a;white-space:nowrap;">Biology</div>
<div style="position:absolute;left:977.5px;top:767.71px;font-size:12.5px;line-height:12.5px;font-weight:400;color:#24272a;white-space:nowrap;">80%</div>
<div style="position:absolute;left:323.5px;top:802.97px;font-size:13.3px;line-height:13.3px;font-weight:400;color:#24272a;white-space:nowrap;">Isaeva Alice</div>
<div style="position:absolute;left:657px;top:802.97px;font-size:13.3px;line-height:13.3px;font-weight:400;color:#24272a;white-space:nowrap;">9b</div>
<div style="position:absolute;left:804.5px;top:802.97px;font-size:13.3px;line-height:13.3px;font-weight:400;color:#24272a;white-space:nowrap;">Biology</div>
<div style="position:absolute;left:977.5px;top:803.64px;font-size:12.5px;line-height:12.5px;font-weight:400;color:#24272a;white-space:nowrap;">79%</div>
<div style="position:absolute;left:323.5px;top:838.90px;font-size:13.3px;line-height:13.3px;font-weight:400;color:#24272a;white-space:nowrap;">Kiseleva Alena</div>
<div style="position:absolute;left:657px;top:838.90px;font-size:13.3px;line-height:13.3px;font-weight:400;color:#24272a;white-space:nowrap;">9b</div>
<div style="position:absolute;left:804.5px;top:838.90px;font-size:13.3px;line-height:13.3px;font-weight:400;color:#24272a;white-space:nowrap;">Biology</div>
<div style="position:absolute;left:977.5px;top:839.57px;font-size:12.5px;line-height:12.5px;font-weight:400;color:#24272a;white-space:nowrap;">93%</div>
<div style="position:absolute;left:323.5px;top:874.83px;font-size:13.3px;line-height:13.3px;font-weight:400;color:#24272a;white-space:nowrap;">Korotkov Savva</div>
<div style="position:absolute;left:657px;top:874.83px;font-size:13.3px;line-height:13.3px;font-weight:400;color:#24272a;white-space:nowrap;">9a</div>
<div style="position:absolute;left:804.5px;top:874.83px;font-size:13.3px;line-height:13.3px;font-weight:400;color:#24272a;white-space:nowrap;">Biology</div>
<div style="position:absolute;left:977.5px;top:875.50px;font-size:12.5px;line-height:12.5px;font-weight:400;color:#24272a;white-space:nowrap;">79%</div>
<div style="position:absolute;left:1836px;top:828px;width:52px;height:52px;border-radius:50%;background:#fff;box-shadow:0 2px 14px rgba(0,0,0,0.2)"></div>
<svg style="position:absolute;left:1850px;top:840px" width="24" height="24" viewBox="0 0 24 24"><rect x="1.8" y="1.8" width="20.6" height="20.6" rx="5.5" fill="none" stroke="#111" stroke-width="2"/><path d="M9.6 9.5 Q9.6 7 12.1 7 Q14.6 7 14.6 9.3 Q14.6 10.8 12.9 11.6 Q12.1 12 12.1 13.6" fill="none" stroke="#111" stroke-width="1.9" stroke-linecap="round"/><circle cx="12.1" cy="16.8" r="1.2" fill="#111"/></svg>
</body></html>
